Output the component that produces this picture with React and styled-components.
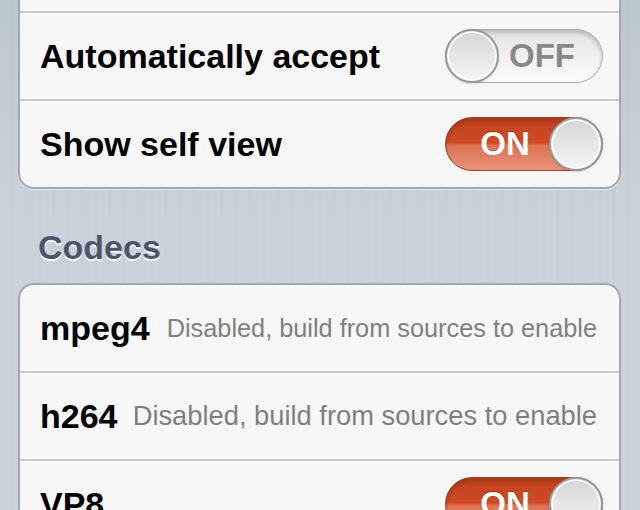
import React from "react";
import styled, { createGlobalStyle } from "styled-components";

const Global = createGlobalStyle`
  html, body { margin: 0; padding: 0; height: 100%; }
  body {
    overflow: hidden;
    font-family: "Liberation Sans", Arial, Helvetica, sans-serif;
    background-color: #c8d1d8;
    background-image:
      repeating-linear-gradient(90deg, rgba(255,255,255,0.02) 0 10px, rgba(0,0,0,0.008) 10px 14px),
      linear-gradient(#bac6ce 0px, #c9d2d9 220px, #c9d2d9 100%);
  }
`;

const Page = styled.div`
  padding: 0 19px 0 18px;
  margin-top: -77px;
`;

const Card = styled.div`
  background: #f7f7f7;
  border: 2px solid #9ea9b2;
  border-radius: 16px;
  box-shadow: 0 1px 0 rgba(255, 255, 255, 0.55);
  overflow: hidden;
`;

const Row = styled.div`
  height: 86px;
  display: flex;
  align-items: center;
  padding: 0 16px 0 20px;
  border-top: ${(p) => (p.$first ? "none" : "2px solid #c8c8c8")};
  box-shadow: ${(p) => (p.$first ? "none" : "inset 0 1px 0 #ffffff")};
`;

const Title = styled.span`
  font-size: 34px;
  font-weight: bold;
  color: #000;
  white-space: nowrap;
`;

const Detail = styled.span`
  margin-left: auto;
  padding-right: 6px;
  font-size: ${(p) => p.$size}px;
  color: #7f7f7f;
  white-space: nowrap;
`;

const Spacer = styled.div`
  flex: 1;
`;

const Header = styled.div`
  padding: 38px 0 16px 20px;
  line-height: 40px;
  font-size: 34px;
  font-weight: bold;
  color: #4c566b;
  text-shadow: 0 2px 0 rgba(255, 255, 255, 0.95);
`;

const Track = styled.div`
  width: 158px;
  height: 54px;
  box-sizing: border-box;
  border-radius: 27px;
  display: flex;
  flex-direction: ${(p) => (p.$on ? "row-reverse" : "row")};
  align-items: center;
  border: 1px solid ${(p) => (p.$on ? "#a33c1f" : "#a8a8a8")};
  background: ${(p) =>
    p.$on
      ? "linear-gradient(#c0401d 0%, #cf4b26 48%, #dd7253 53%, #e8947b 100%)"
      : "linear-gradient(#e3e3e3 0%, #f0f0f0 50%, #fbfbfb 100%)"};
  box-shadow: inset 0 3px 4px rgba(0, 0, 0, 0.18);
  flex-shrink: 0;
`;

const Knob = styled.div`
  width: 54px;
  height: 54px;
  margin: -1px;
  box-sizing: border-box;
  border-radius: 50%;
  border: 2px solid #999999;
  background: linear-gradient(#d5d5d5 0%, #e6e6e6 50%, #f4f4f4 100%);
  box-shadow: inset 0 0 0 2px rgba(255, 255, 255, 0.85), 0 1px 2px rgba(0, 0, 0, 0.15);
  flex-shrink: 0;
`;

const SwitchLabel = styled.span`
  flex: 1;
  text-align: center;
  font-size: 33px;
  font-weight: bold;
  padding: ${(p) => (p.$on ? "0 0 0 14px" : "0 16px 0 0")};
  color: ${(p) => (p.$on ? "#ffffff" : "#888888")};
  text-shadow: ${(p) =>
    p.$on ? "0 -1px 0 rgba(0,0,0,0.25)" : "0 1px 0 rgba(255,255,255,0.9)"};
`;

function Switch({ on }) {
  return (
    <Track $on={on}>
      <Knob />
      <SwitchLabel $on={on}>{on ? "ON" : "OFF"}</SwitchLabel>
    </Track>
  );
}

export default function App() {
  return (
    <>
      <Global />
      <Page>
        <Card>
          <Row $first />
          <Row>
            <Title>Automatically accept</Title>
            <Spacer />
            <Switch on={false} />
          </Row>
          <Row>
            <Title>Show self view</Title>
            <Spacer />
            <Switch on />
          </Row>
        </Card>
        <Header>Codecs</Header>
        <Card>
          <Row $first>
            <Title>mpeg4</Title>
            <Detail $size={25.3}>Disabled, build from sources to enable</Detail>
          </Row>
          <Row>
            <Title>h264</Title>
            <Detail $size={27.3}>Disabled, build from sources to enable</Detail>
          </Row>
          <Row>
            <Title>VP8</Title>
            <Spacer />
            <Switch on />
          </Row>
        </Card>
      </Page>
    </>
  );
}
